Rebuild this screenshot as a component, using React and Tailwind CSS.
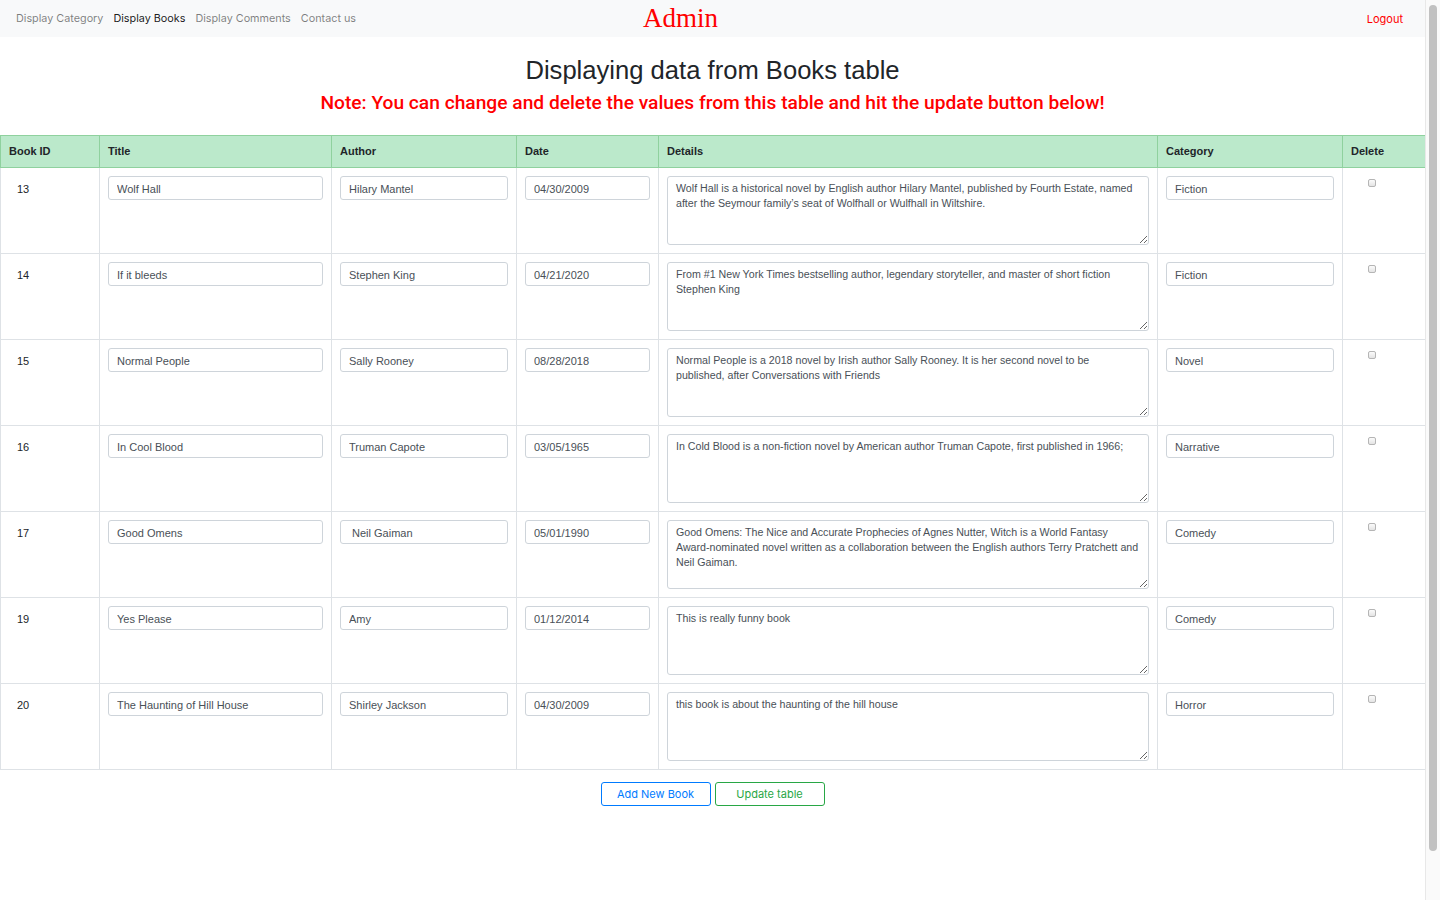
import React from 'react'

const books = [
  {
    id: 13,
    title: "Wolf Hall",
    author: "Hilary Mantel",
    date: "04/30/2009",
    details: "Wolf Hall is a historical novel by English author Hilary Mantel, published by Fourth Estate, named after the Seymour family\u2019s seat of Wolfhall or Wulfhall in Wiltshire.",
    category: "Fiction"
  },
  {
    id: 14,
    title: "If it bleeds",
    author: "Stephen King",
    date: "04/21/2020",
    details: "From #1 New York Times bestselling author, legendary storyteller, and master of short fiction Stephen King",
    category: "Fiction"
  },
  {
    id: 15,
    title: "Normal People",
    author: "Sally Rooney",
    date: "08/28/2018",
    details: "Normal People is a 2018 novel by Irish author Sally Rooney. It is her second novel to be published, after Conversations with Friends",
    category: "Novel"
  },
  {
    id: 16,
    title: "In Cool Blood",
    author: "Truman Capote",
    date: "03/05/1965",
    details: "In Cold Blood is a non-fiction novel by American author Truman Capote, first published in 1966;",
    category: "Narrative"
  },
  {
    id: 17,
    title: "Good Omens",
    author: " Neil Gaiman",
    date: "05/01/1990",
    details: "Good Omens: The Nice and Accurate Prophecies of Agnes Nutter, Witch is a World Fantasy Award-nominated novel written as a collaboration between the English authors Terry Pratchett and Neil Gaiman.",
    category: "Comedy"
  },
  {
    id: 19,
    title: "Yes Please",
    author: "Amy",
    date: "01/12/2014",
    details: "This is really funny book",
    category: "Comedy"
  },
  {
    id: 20,
    title: "The Haunting of Hill House",
    author: "Shirley Jackson",
    date: "04/30/2009",
    details: "this book is about the haunting of the hill house",
    category: "Horror"
  }
];

const inputCls = "block w-full h-[24px] px-[8px] pt-[1px] border border-[#ced4da] rounded-[3px] bg-white text-[11px] text-[#495057] outline-none";

function Field({ value }){
  return <input type="text" defaultValue={value} className={inputCls} />;
}

function BookRow({ book }){
  let td = "border border-[#dee2e6] p-[8px] align-top";
  return (
    <tr className="h-[86px]">
      <td className={td}>
        <div className="h-[24px] flex items-center pt-[2px] pl-[8px] text-[11px] text-[#212529]">{book.id}</div>
      </td>
      <td className={td}><Field value={book.title} /></td>
      <td className={td}><Field value={book.author} /></td>
      <td className={td}><Field value={book.date} /></td>
      <td className={td}>
        <textarea
          defaultValue={book.details}
          className="block w-full h-[69px] px-[8px] py-[4px] border border-[#ced4da] rounded-[3px] bg-white text-[10.65px] leading-[15px] text-[#495057] outline-none">
        </textarea>
      </td>
      <td className={td}><Field value={book.category} /></td>
      <td className={td}>
        <div className="flex pt-[3px] pl-[17px]">
          <span className="block w-[8px] h-[8px] rounded-[2px] border border-[#b5b5b5] bg-gradient-to-b from-[#fbfbfb] to-[#e4e4e4]"></span>
        </div>
      </td>
    </tr>);
}

export default function App(){
  let th = "border border-[#8fd19e] px-[8px] text-left font-bold text-[11px] text-[#212529]";
  return (
    <div className="flex w-[1440px] h-[900px] bg-white overflow-hidden" style={{fontFamily: "'Liberation Sans', Arial, sans-serif"}}>
      <div className="w-[1425px] shrink-0">
        <nav className="h-[37px] bg-[#f8f9fa] flex items-center pt-[1px]">
          <div className="w-[643px] shrink-0 flex items-center pl-[11px] text-[10.8px] text-[rgba(0,0,0,0.5)]" style={{fontFamily: "Inter, 'Liberation Sans', sans-serif"}}>
            <a className="px-[5px]">Display Category</a>
            <a className="px-[5px] text-[rgba(0,0,0,0.9)]">Display Books</a>
            <a className="px-[5px]">Display Comments</a>
            <a className="px-[5px]">Contact us</a>
          </div>
          <span className="text-[27px] leading-none text-[#ff0000] mt-[-1px]" style={{fontFamily: "'Liberation Serif', 'Times New Roman', serif"}}>Admin</span>
          <a className="ml-auto mr-[22px] text-[11px] text-[#ff0000]" style={{fontFamily: "Inter, 'Liberation Sans', sans-serif"}}>Logout</a>
        </nav>
        <h1 className="mt-[18px] text-center text-[25.6px] leading-[30px] text-[#212529]">Displaying data from Books table</h1>
        <h2 className="mt-[6px] text-center text-[19.2px] leading-[24px] font-medium text-[#ff0000]" style={{fontFamily: "Roboto, 'Liberation Sans', sans-serif"}}>Note: You can change and delete the values from this table and hit the update button below!</h2>
        <table className="mt-[20px] w-[1425px] table-fixed border-collapse">
          <colgroup>
            <col className="w-[99px]" />
            <col className="w-[232px]" />
            <col className="w-[185px]" />
            <col className="w-[142px]" />
            <col className="w-[499px]" />
            <col className="w-[185px]" />
            <col className="w-[83px]" />
          </colgroup>
          <thead>
            <tr className="h-[32px] bg-[#bbe9cb]">
              <th className={th}>Book ID</th>
              <th className={th}>Title</th>
              <th className={th}>Author</th>
              <th className={th}>Date</th>
              <th className={th}>Details</th>
              <th className={th}>Category</th>
              <th className={th}>Delete</th>
            </tr>
          </thead>
          <tbody>
            {books.map(function (book){
              return <BookRow key={book.id} book={book} />;
            })}
          </tbody>
        </table>
        <div className="mt-[12px] flex justify-center gap-[4px]">
          <button className="w-[110px] h-[24px] border border-[#007bff] rounded-[3px] text-[11px] text-[#007bff] bg-white" style={{fontFamily: "Inter, 'Liberation Sans', sans-serif"}}>Add New Book</button>
          <button className="w-[110px] h-[24px] border border-[#28a745] rounded-[3px] text-[11px] text-[#28a745] bg-white" style={{fontFamily: "Inter, 'Liberation Sans', sans-serif"}}>Update table</button>
        </div>
      </div>
      <div className="w-[15px] h-[900px] bg-[#fafafa] border-l border-[#e8e8e8] pt-[5px] px-[3px]">
        <div className="h-[846px] rounded-full bg-[#c1c1c1]"></div>
      </div>
    </div>);
}
